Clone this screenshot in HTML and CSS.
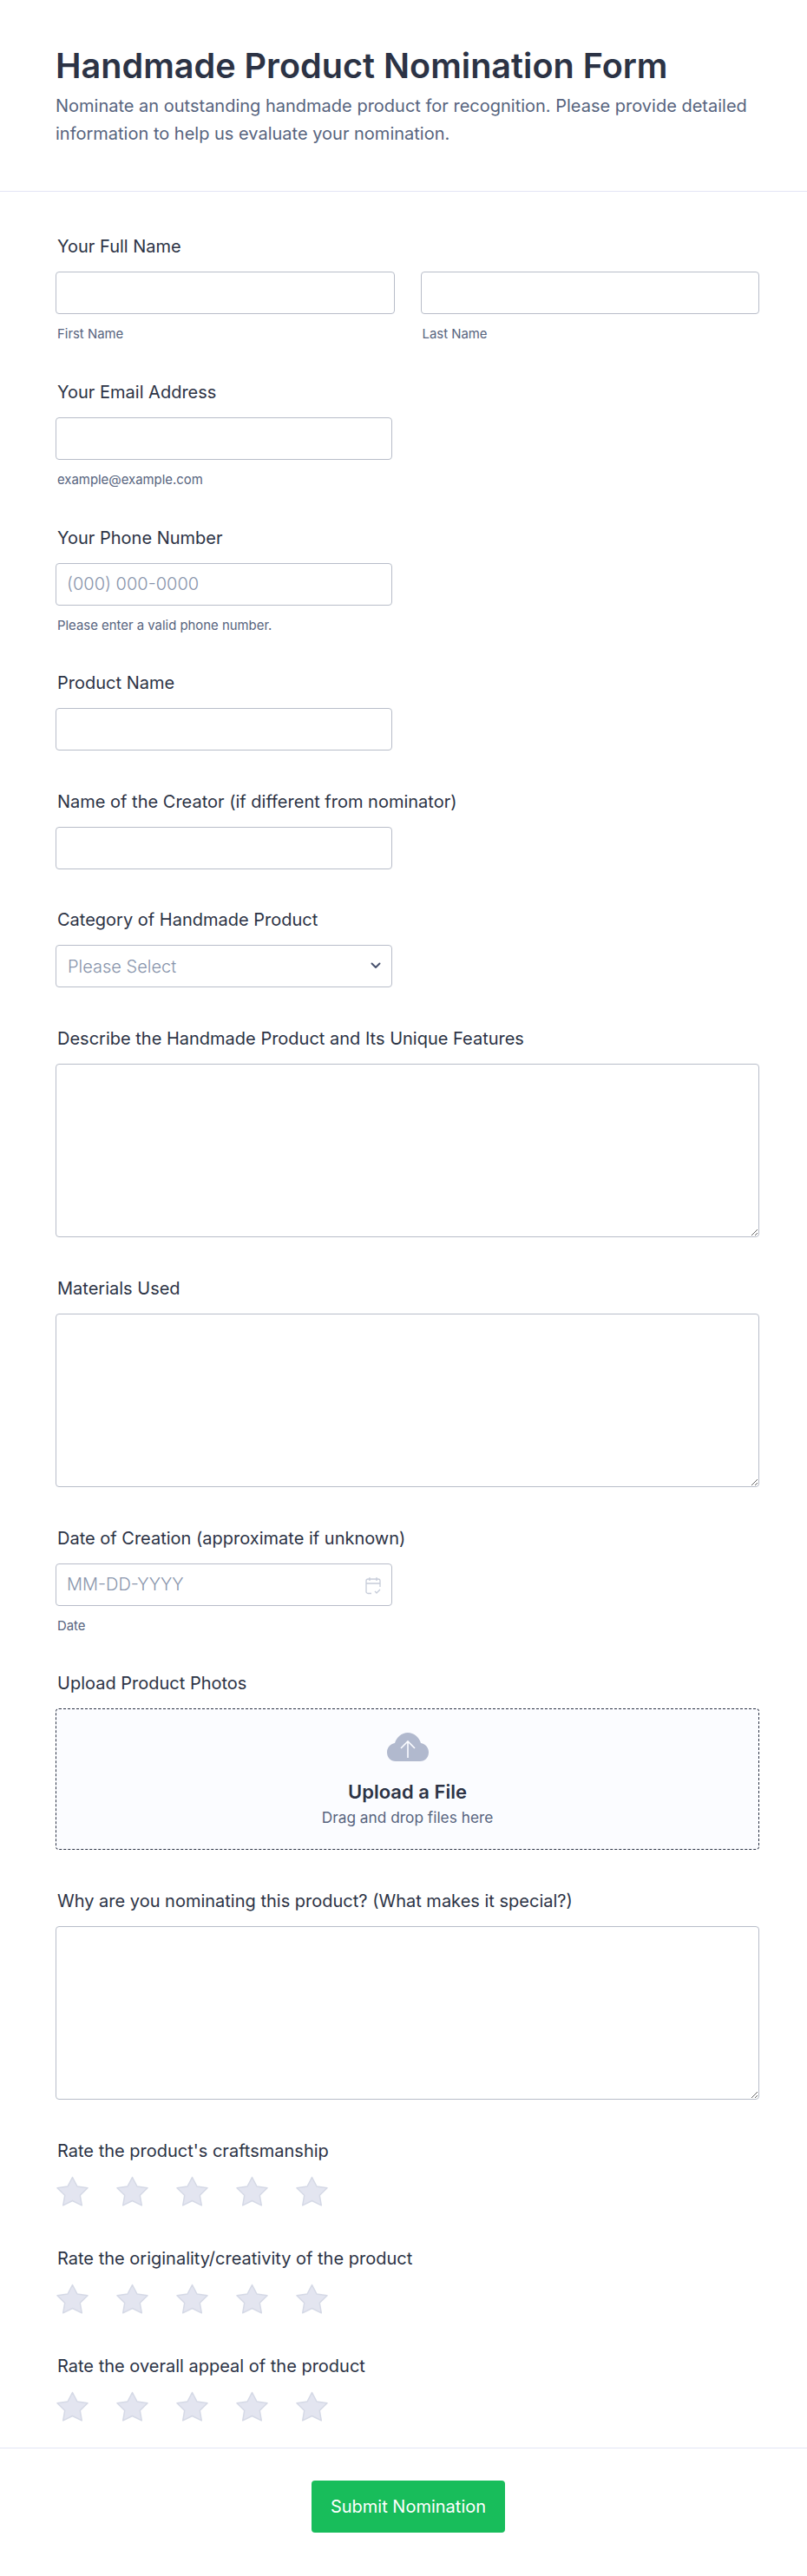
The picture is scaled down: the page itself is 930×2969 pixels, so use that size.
FILE: index.html
```html
<!DOCTYPE html>
<html lang="en">
<head>
    <meta charset="UTF-8">
    <meta name="viewport" content="width=device-width, initial-scale=1.0">
    <title>Handmade Product Nomination Form</title>
    <link rel="stylesheet" href="styles.css">
</head>
<body>
    <svg class="svg-defs" width="0" height="0">
        <symbol id="star" viewBox="0 0 37 35">
            <path d="M18.500 1.500 24 12l12 1.800-8.700 8.500 2 11.500-10.800-5.300-10.800 5.300 2-11.500L1 13.800 13 12z"/>
        </symbol>
    </svg>
    <header class="form-header">
        <h1>Handmade Product Nomination Form</h1>
        <p>Nominate an outstanding handmade product for recognition. Please provide detailed information to help us evaluate your nomination.</p>
    </header>
    <form class="form-body">
        <div class="form-field">
            <label>Your Full Name</label>
            <div class="name-row">
                <div class="name-col">
                    <input type="text" class="input">
                    <span class="sublabel">First Name</span>
                </div>
                <div class="name-col">
                    <input type="text" class="input">
                    <span class="sublabel">Last Name</span>
                </div>
            </div>
        </div>
        <div class="form-field">
            <label>Your Email Address</label>
            <input type="email" class="input short">
            <span class="sublabel">example@example.com</span>
        </div>
        <div class="form-field">
            <label>Your Phone Number</label>
            <input type="text" class="input short" placeholder="(000) 000-0000">
            <span class="sublabel">Please enter a valid phone number.</span>
        </div>
        <div class="form-field">
            <label>Product Name</label>
            <input type="text" class="input short">
        </div>
        <div class="form-field">
            <label>Name of the Creator (if different from nominator)</label>
            <input type="text" class="input short">
        </div>
        <div class="form-field">
            <label>Category of Handmade Product</label>
            <div class="input-wrap short">
                <select class="input select">
                    <option>Please Select</option>
                </select>
                <svg class="select-arrow" width="12" height="8" viewBox="0 0 12 8">
                    <path d="M1.500 1.500 6 6l4.500-4.500" fill="none" stroke="#4a5470" stroke-width="2" stroke-linecap="round" stroke-linejoin="round"/>
                </svg>
            </div>
        </div>
        <div class="form-field">
            <label>Describe the Handmade Product and Its Unique Features</label>
            <textarea class="input textarea"></textarea>
        </div>
        <div class="form-field">
            <label>Materials Used</label>
            <textarea class="input textarea"></textarea>
        </div>
        <div class="form-field">
            <label>Date of Creation (approximate if unknown)</label>
            <div class="input-wrap short">
                <input type="text" class="input" placeholder="MM-DD-YYYY">
                <svg class="date-icon" width="18" height="21" viewBox="0 0 18 21" fill="none" stroke="#c6ccd9" stroke-width="1.300">
                    <path d="M7 19.500H3a2 2 0 0 1-2-2V5a2 2 0 0 1 2-2h12a2 2 0 0 1 2 2v7"/>
                    <path d="M1 8h16M5 1v4M13 1v4"/>
                    <path d="m11 17 2 2 4-4"/>
                </svg>
            </div>
            <span class="sublabel">Date</span>
        </div>
        <div class="form-field">
            <label>Upload Product Photos</label>
            <div class="upload-box">
                <svg class="upload-icon" width="48" height="33" viewBox="0 0 48 33">
                    <path d="M10 33C4 33 0 28.500 0 22.500 0 17 4 12.800 9 12 11 5 17 0 24 0s13 5 15 12c5 .8 9 5 9 10.500C48 28.500 44 33 38 33z" fill="#b1b9ce"/>
                    <path d="M24 29V10M16 18l8-8 8 8" fill="none" stroke="#fbfcff" stroke-width="1.600"/>
                </svg>
                <strong>Upload a File</strong>
                <span>Drag and drop files here</span>
            </div>
        </div>
        <div class="form-field">
            <label>Why are you nominating this product? (What makes it special?)</label>
            <textarea class="input textarea"></textarea>
        </div>
        <div class="form-field rating-field">
            <label>Rate the product's craftsmanship</label>
            <div class="stars">
                <svg class="star"><use href="#star"/></svg>
                <svg class="star"><use href="#star"/></svg>
                <svg class="star"><use href="#star"/></svg>
                <svg class="star"><use href="#star"/></svg>
                <svg class="star"><use href="#star"/></svg>
            </div>
        </div>
        <div class="form-field rating-field">
            <label>Rate the originality/creativity of the product</label>
            <div class="stars">
                <svg class="star"><use href="#star"/></svg>
                <svg class="star"><use href="#star"/></svg>
                <svg class="star"><use href="#star"/></svg>
                <svg class="star"><use href="#star"/></svg>
                <svg class="star"><use href="#star"/></svg>
            </div>
        </div>
        <div class="form-field rating-field">
            <label>Rate the overall appeal of the product</label>
            <div class="stars">
                <svg class="star"><use href="#star"/></svg>
                <svg class="star"><use href="#star"/></svg>
                <svg class="star"><use href="#star"/></svg>
                <svg class="star"><use href="#star"/></svg>
                <svg class="star"><use href="#star"/></svg>
            </div>
        </div>
    </form>
    <footer class="form-footer">
        <button type="button" class="submit-btn">Submit Nomination</button>
    </footer>
</body>
</html>
```

FILE: styles.css
```css
* {
    box-sizing: border-box;
}
body {
    margin: 0;
    background-color: #fff;
    font-family: Inter, "Liberation Sans", sans-serif;
    color: #2c3345;
}
.svg-defs {
    display: block;
    height: 0;
}
.form-header {
    height: 221px;
    padding: 50px 55px 0 64px;
    border-bottom: 1px solid #e3e5f5;
}
.form-header h1 {
    margin: 0;
    font-size: 39.6px;
    line-height: 52px;
    font-weight: 600;
}
.form-header p {
    margin: 4px 0 0;
    font-size: 20px;
    line-height: 32px;
    color: #57647e;
}
.form-body {
    padding: 50px 55px 0 64px;
}
.form-field {
    margin-bottom: 45.5px;
}
.form-field label {
    display: block;
    margin: 0 0 17px 2px;
    padding-top: 1px;
    font-size: 20px;
    line-height: 24px;
    font-weight: 400;
}
.input {
    display: block;
    width: 100%;
    height: 49px;
    padding: 0 12px;
    background-color: #fff;
    border: 1px solid #b8bdc9;
    border-radius: 4px;
    font-family: inherit;
    font-size: 20px;
    font-weight: 300;
    color: #8894ab;
}
.input::placeholder {
    color: #8894ab;
    opacity: 1;
}
.short {
    width: 388px;
}
.name-row {
    display: flex;
    gap: 30px;
}
.name-col {
    flex: 1;
}
.sublabel {
    display: block;
    margin: 15px 0 0.5px 2px;
    font-size: 14.9px;
    line-height: 16px;
    color: #57647e;
}
.input-wrap {
    position: relative;
}
.select {
    padding-left: 13px;
    appearance: none;
}
.select-arrow {
    position: absolute;
    top: 20px;
    right: 13px;
}
.date-icon {
    position: absolute;
    top: 15px;
    right: 13px;
}
.textarea {
    height: 200.5px;
    resize: both;
}
.upload-box {
    display: flex;
    flex-direction: column;
    align-items: center;
    height: 163px;
    padding-top: 27px;
    background-color: #fbfcff;
    border: 1px dashed #2c3345;
    border-radius: 4px;
}
.upload-box strong {
    margin-top: 21px;
    font-size: 22px;
    line-height: 28px;
    font-weight: 600;
}
.upload-box span {
    margin-top: 6px;
    font-size: 17.3px;
    line-height: 20px;
    color: #57647e;
}
.rating-field {
    margin-bottom: 47px;
}
.rating-field:last-child {
    margin-bottom: 30px;
}
.rating-field label {
    margin-bottom: 17px;
}
.stars {
    display: flex;
    gap: 32px;
    height: 35px;
    margin-left: 1px;
}
.star {
    width: 37px;
    height: 35px;
    fill: #e3e5f0;
    stroke: #d5d9e6;
    stroke-width: 1.500;
    stroke-linejoin: round;
}
.form-footer {
    display: flex;
    justify-content: center;
    height: 147px;
    padding: 37px 0 0 11px;
    border-top: 1px solid #e3e5f5;
}
.submit-btn {
    width: 223px;
    height: 60px;
    background-color: #18bd5b;
    border: none;
    border-radius: 4px;
    font-family: Inter, "Liberation Sans", sans-serif;
    font-size: 20px;
    font-weight: 400;
    color: #fff;
    cursor: pointer;
}
```
